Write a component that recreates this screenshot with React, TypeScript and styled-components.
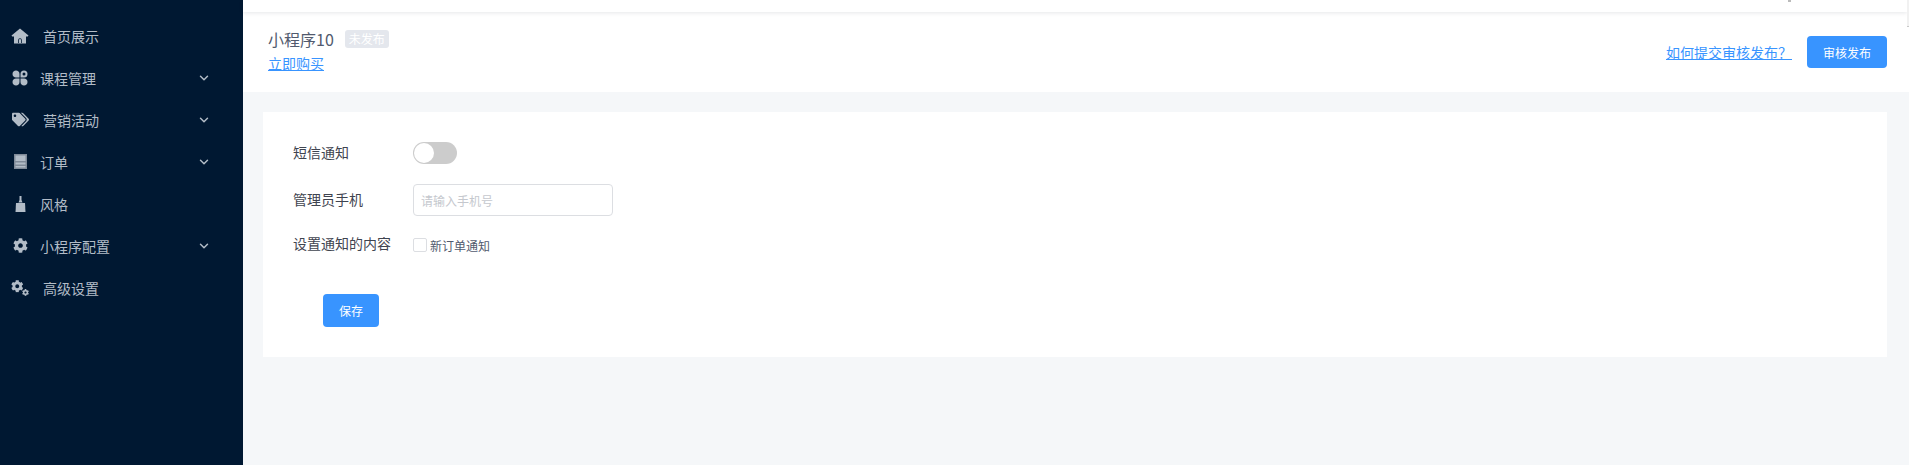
import React from "react";
import styled, { createGlobalStyle } from "styled-components";
import { FaTags, FaCog } from "react-icons/fa";
import { FiChevronDown } from "react-icons/fi";

const Global = createGlobalStyle`
  html, body { margin: 0; padding: 0; height: 100%; overflow: hidden; }
  body { font-family: "Noto Sans CJK SC", "Liberation Sans", sans-serif; background: #f5f7f9; }
  #root { height: 100%; }
  * { box-sizing: border-box; }
`;

const Page = styled.div`
  display: flex;
  height: 465px;
  position: relative;
`;
const Sidebar = styled.nav`
  width: 243px;
  flex: none;
  background: #001832;
  padding-top: 15px;
`;
const NavRow = styled.div`
  height: 42px;
  display: flex;
  align-items: center;
  padding-left: 10px;
  padding-right: 32px;
  color: #b2bcc7;
  font-size: 14px;
`;
const NavIcon = styled.span`
  width: 20px;
  height: 20px;
  flex: none;
  display: flex;
  align-items: center;
  justify-content: center;
  margin-top: -1px;
  color: #b2bcc7;
`;
const NavLabel = styled.span<{ $gap: number }>`
  margin-left: ${(p) => p.$gap}px;
  flex: 1;
`;
const Chevron = styled(FiChevronDown)`
  width: 14px;
  height: 14px;
  stroke-width: 2.5;
`;
const Main = styled.main`
  flex: 1;
  min-width: 0;
  display: flex;
  flex-direction: column;
`;
const TopBar = styled.div`
  height: 12px;
  margin-right: 2px;
  background: #fff;
  box-shadow: 0 1px 4px rgba(0, 21, 41, 0.1);
  position: relative;
  z-index: 1;
`;
const CutGlyph = styled.span`
  position: absolute;
  left: 1545px;
  top: 0;
  width: 3px;
  height: 2px;
  background: #bbb;
`;
const ScrollTip = styled.span`
  position: absolute;
  right: 0;
  top: 0;
  width: 2px;
  height: 27px;
  background: #f1f1f1;
  border-bottom: 1px solid #c8c8c8;
  z-index: 2;
`;
const Header = styled.header`
  height: 80px;
  background: #fff;
  display: flex;
  align-items: center;
  justify-content: space-between;
  padding: 0 22px 0 25px;
`;
const TitleBlock = styled.div`
  display: flex;
  flex-direction: column;
  gap: 2px;
  padding-bottom: 4px;
`;
const TitleRow = styled.div`
  display: flex;
  align-items: center;
  gap: 11px;
`;
const Title = styled.span`
  font-size: 16px;
  line-height: 24px;
  color: #515a6e;
`;
const Badge = styled.span`
  width: 44px;
  height: 18px;
  border-radius: 3px;
  background: #e4e7ed;
  color: #fff;
  font-size: 12px;
  line-height: 18px;
  text-align: center;
`;
const BuyLink = styled.a`
  font-size: 14px;
  line-height: 20px;
  color: #3894ff;
  text-decoration: underline;
`;
const HeaderActions = styled.div`
  display: flex;
  align-items: center;
  gap: 15px;
`;
const PrimaryButton = styled.button<{ $w: number; $h: number }>`
  width: ${(p) => p.$w}px;
  height: ${(p) => p.$h}px;
  background: #3894ff;
  color: #fff;
  border: 0;
  border-radius: 4px;
  padding: 0;
  font: 12px "Noto Sans CJK SC", sans-serif;
`;
const Content = styled.div`
  flex: 1;
  padding: 20px 22px 0 20px;
`;
const Card = styled.section`
  height: 245px;
  background: #fff;
  padding: 30px 30px 0;
`;
const FormRow = styled.div<{ $h: number; $top?: number }>`
  display: flex;
  align-items: center;
  height: ${(p) => p.$h}px;
  margin-top: ${(p) => p.$top ?? 0}px;
`;
const Label = styled.label<{ $lift: number }>`
  width: 120px;
  font-size: 14px;
  color: #3f4450;
  flex: none;
  margin-bottom: ${(p) => p.$lift * 2}px;
`;
const Toggle = styled.span`
  display: block;
  width: 44px;
  height: 22px;
  border-radius: 11px;
  background: #ccc;
  position: relative;
  &::after {
    content: "";
    position: absolute;
    left: 1px;
    top: 1px;
    width: 20px;
    height: 20px;
    border-radius: 50%;
    background: #fff;
  }
`;
const PhoneInput = styled.input`
  width: 200px;
  height: 32px;
  border: 1px solid #dcdee2;
  border-radius: 4px;
  padding: 0 7px;
  font: 12px "Noto Sans CJK SC", sans-serif;
  &::placeholder { color: #c5c8ce; opacity: 1; }
`;
const CheckLabel = styled.span`
  display: flex;
  align-items: center;
  gap: 3px;
  font-size: 12px;
  color: #515a6e;
  margin-bottom: 2px;
`;
const CheckBox = styled.span`
  width: 14px;
  height: 14px;
  border: 1px solid #dcdee2;
  border-radius: 2px;
  background: #fff;
`;
const SaveRow = styled.div`
  padding: 37px 0 0 30px;
`;

const HomeIcon = () => (
  <svg width="18" height="16" viewBox="0 0 18 16" fill="currentColor">
    <path
      fillRule="evenodd"
      d="M9 0.5L17.5 7.5L16.8 8.5H15V15.5H3V8.5H1.2L0.5 7.5L9 0.5ZM7.2 15V12A1.8 1.8 0 0 1 10.8 12V15H10V12A1 1 0 0 0 8 12V15Z"
    />
  </svg>
);
const Clover = () => (
  <svg width="16" height="16" viewBox="0 0 16 16" fill="currentColor">
    <path d="M4 0.5C6 0.5 7.5 2 7.5 4V7.5H4C2 7.5 0.5 6 0.5 4S2 0.5 4 0.5Z" />
    <path
      fillRule="evenodd"
      d="M12 0.5A3.5 3.5 0 0 1 12 7.5H8.5V4A3.5 3.5 0 0 1 12 0.5ZM12 2.5A1.5 1.5 0 0 0 12 5.5A1.5 1.5 0 0 0 12 2.5Z"
    />
    <path d="M4 15.5C2 15.5 0.5 14 0.5 12S2 8.5 4 8.5H7.5V12C7.5 14 6 15.5 4 15.5Z" />
    <path d="M12 15.5C14 15.5 15.5 14 15.5 12S14 8.5 12 8.5H8.5V12C8.5 14 10 15.5 12 15.5Z" />
  </svg>
);
const OrderIcon = () => (
  <svg width="13" height="15" viewBox="0 0 13 15">
    <rect x="0" y="0" width="13" height="15" fill="#7f8a98" />
    <rect x="1.5" y="1.5" width="10" height="5.5" fill="#b2bcc7" />
    <rect x="1.5" y="8.5" width="10" height="2" fill="#b2bcc7" />
    <rect x="1.5" y="12" width="10" height="1.5" fill="#b2bcc7" />
  </svg>
);
const BrushIcon = () => (
  <svg width="11" height="16" viewBox="0 0 11 16" fill="currentColor">
    <path d="M4.5 0H6.5V4L7.5 6.5H3.5L4.5 4Z" />
    <path d="M1 7H10L10.5 16H0.5Z" />
  </svg>
);
const CogsIcon = () => (
  <svg width="18" height="16" viewBox="0 0 18 16" fill="currentColor">
    <FaCog x={0} y={0} size={12.5} />
    <FaCog x={11} y={9} size={7} />
  </svg>
);

type Item = { label: string; icon: React.ReactNode; gap: number; open?: boolean };
const items: Item[] = [
  { label: "首页展示", icon: <HomeIcon />, gap: 13 },
  { label: "课程管理", icon: <Clover />, gap: 10, open: true },
  { label: "营销活动", icon: <FaTags size={17} />, gap: 13, open: true },
  { label: "订单", icon: <OrderIcon />, gap: 10, open: true },
  { label: "风格", icon: <BrushIcon />, gap: 10 },
  { label: "小程序配置", icon: <FaCog size={15} />, gap: 10, open: true },
  { label: "高级设置", icon: <CogsIcon />, gap: 13 },
];

export default function App() {
  return (
    <Page>
      <Global />
      <Sidebar>
        {items.map((it) => (
          <NavRow key={it.label}>
            <NavIcon>{it.icon}</NavIcon>
            <NavLabel $gap={it.gap}>{it.label}</NavLabel>
            {it.open && <Chevron />}
          </NavRow>
        ))}
      </Sidebar>
      <Main>
        <TopBar>
          <CutGlyph />
        </TopBar>
        <Header>
          <TitleBlock>
            <TitleRow>
              <Title>小程序10</Title>
              <Badge>未发布</Badge>
            </TitleRow>
            <BuyLink>立即购买</BuyLink>
          </TitleBlock>
          <HeaderActions>
            <BuyLink>如何提交审核发布？</BuyLink>
            <PrimaryButton $w={80} $h={32}>审核发布</PrimaryButton>
          </HeaderActions>
        </Header>
        <Content>
          <Card>
            <FormRow $h={22}>
              <Label $lift={1}>短信通知</Label>
              <Toggle />
            </FormRow>
            <FormRow $h={32} $top={20}>
              <Label $lift={1}>管理员手机</Label>
              <PhoneInput placeholder="请输入手机号" />
            </FormRow>
            <FormRow $h={22} $top={19}>
              <Label $lift={3}>设置通知的内容</Label>
              <CheckLabel>
                <CheckBox />
                新订单通知
              </CheckLabel>
            </FormRow>
            <SaveRow>
              <PrimaryButton $w={56} $h={33}>保存</PrimaryButton>
            </SaveRow>
          </Card>
        </Content>
      </Main>
      <ScrollTip />
    </Page>
  );
}
